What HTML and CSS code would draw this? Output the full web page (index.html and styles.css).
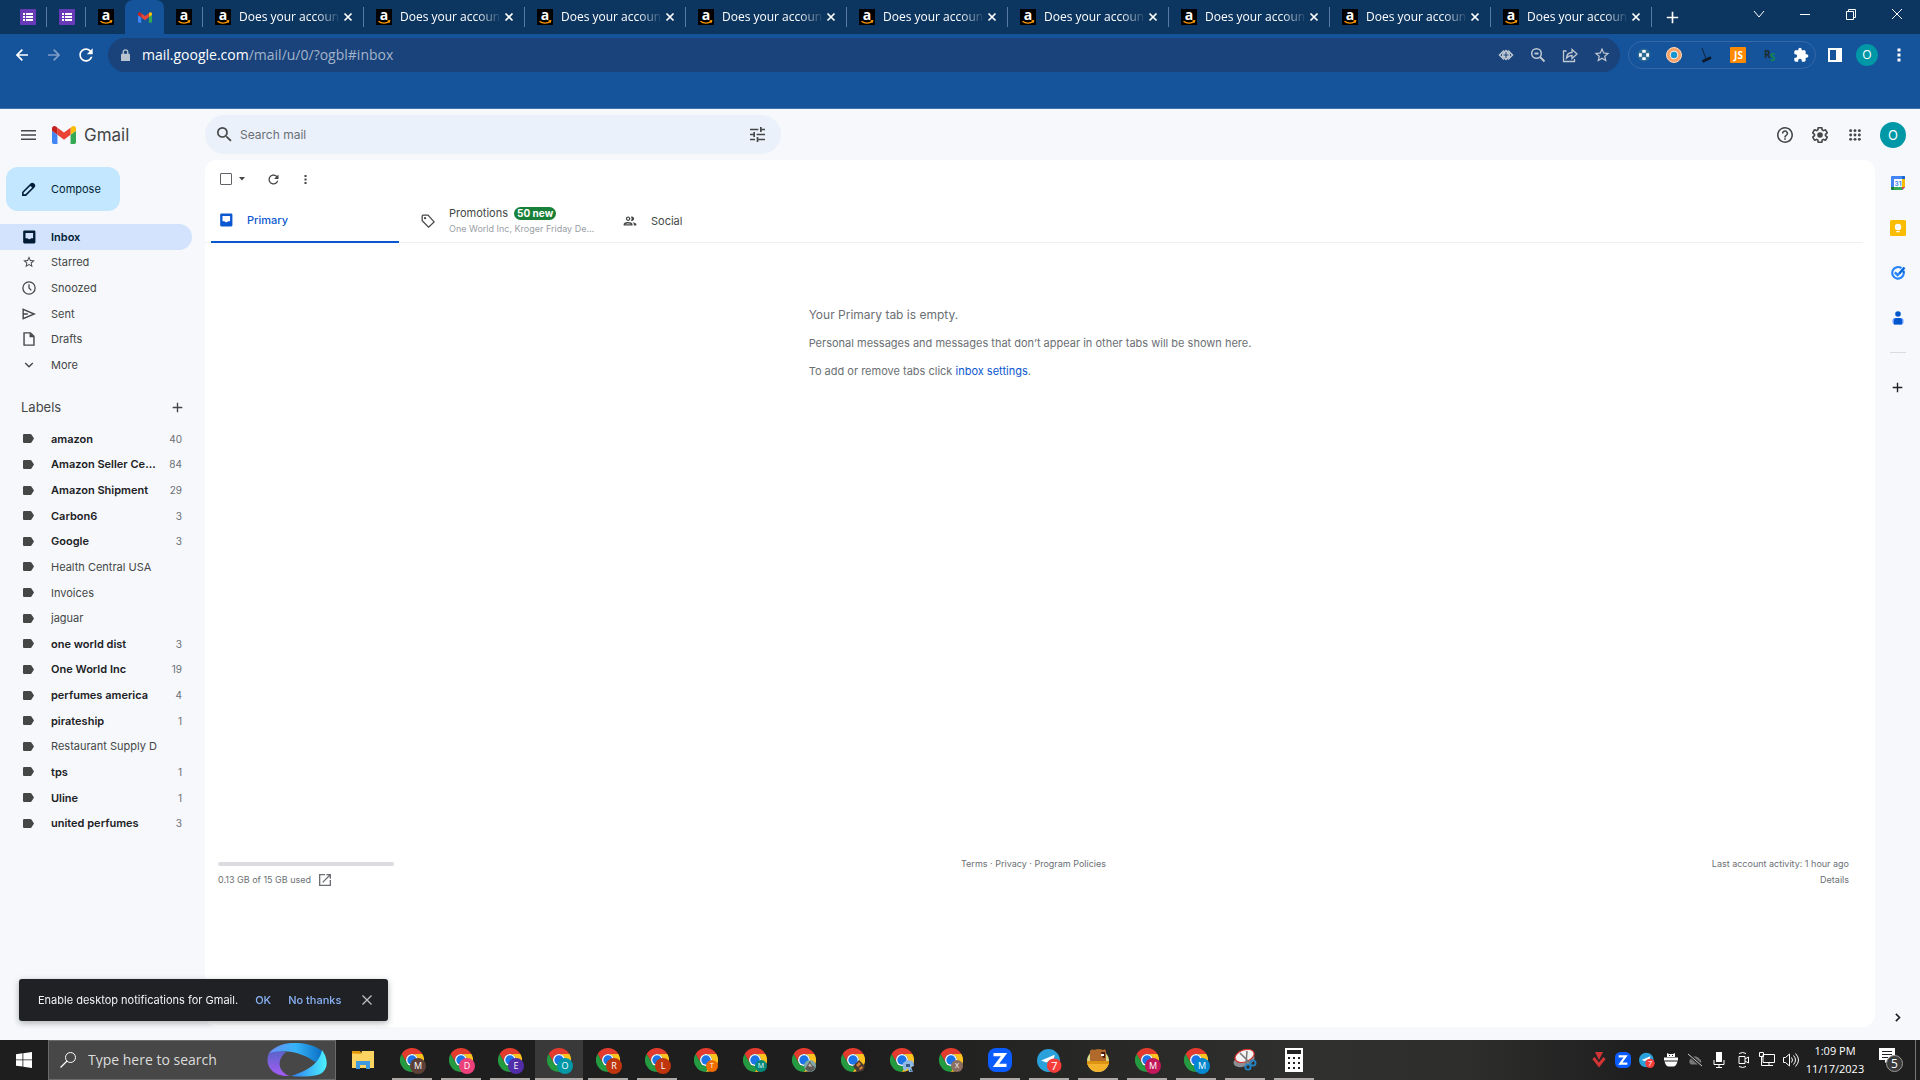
FILE: index.html
```html
<!DOCTYPE html>
<html lang="en">
  <head>
    <meta charset="utf-8" />
    <meta name="viewport" content="width=device-width,initial-scale=1.0" />
    <title>Inbox - Gmail</title>
    <link rel="stylesheet" href="styles.css">
  </head>

  <body>
    <!-- Shared icons -->
    <svg class="sprite" aria-hidden="true">
      <symbol id="i-forms" viewBox="0 0 16 16">
        <rect width="16" height="16" rx="1" fill="#673ab7" />
        <path fill="#fff" d="M3 4h2v2H3zm3 0h7v2H6zM3 7h2v2H3zm3 0h7v2H6zM3 10h2v2H3zm3 0h7v2H6z" />
      </symbol>
      <symbol id="i-amazon" viewBox="0 0 16 16">
        <rect width="16" height="16" fill="#000" />
        <text x="8" y="11" text-anchor="middle" font-size="14" font-weight="700" fill="#fff">a</text>
        <path fill="none" stroke="#f90" stroke-width="1.3" d="M2.5 12.2c3 2.6 8 2.6 10.6.4M11.6 12l2-.2-.4 1.8" />
      </symbol>
      <symbol id="i-gmail" viewBox="52 42 88 66">
        <path fill="#4285f4" d="M58 108h14V74L52 59v43c0 3.32 2.69 6 6 6" />
        <path fill="#34a853" d="M120 108h14c3.32 0 6-2.69 6-6V59l-20 15" />
        <path fill="#fbbc04" d="M120 48v26l20-15v-8c0-7.42-8.47-11.65-14.4-7.2" />
        <path fill="#ea4335" d="M72 74V48l24 18 24-18v26L96 92" />
        <path fill="#c5221f" d="M52 51v8l20 15V48l-5.6-4.2c-5.94-4.45-14.4-.22-14.4 7.2" />
      </symbol>
      <symbol id="i-x" viewBox="0 0 16 16">
        <path fill="none" stroke="currentColor" stroke-width="2" d="M4 4l8 8M12 4l-8 8" />
      </symbol>
      <symbol id="i-star" viewBox="0 0 24 24">
        <path fill="currentColor" d="M22 9.24l-7.19-.62L12 2 9.19 8.63 2 9.24l5.46 4.73L5.82 21 12 17.27 18.18 21l-1.63-7.03L22 9.24zM12 15.4l-3.76 2.27 1-4.28-3.32-2.88 4.38-.38L12 6.1l1.71 4.04 4.38.38-3.32 2.88 1 4.28L12 15.4z" />
      </symbol>
      <symbol id="i-refresh" viewBox="0 0 24 24">
        <path fill="currentColor" d="M17.65 6.35C16.2 4.9 14.21 4 12 4c-4.42 0-7.99 3.58-7.99 8s3.57 8 7.99 8c3.73 0 6.84-2.55 7.73-6h-2.08c-.82 2.33-3.04 4-5.65 4-3.31 0-6-2.69-6-6s2.69-6 6-6c1.66 0 3.14.69 4.22 1.78L13 11h7V4l-2.35 2.35z" />
      </symbol>
      <symbol id="i-arrow" viewBox="0 0 24 24">
        <path fill="none" stroke="currentColor" stroke-width="2.6" d="M21 12H5M12.5 4L4.500 12l8 8" />
      </symbol>
      <symbol id="i-dots" viewBox="0 0 16 16">
        <path fill="currentColor" d="M6.500 1.500h3v3h-3zM6.500 6.500h3v3h-3zM6.500 11.500h3v3h-3z" />
      </symbol>
      <symbol id="i-inbox" viewBox="0 0 24 24">
        <path fill="currentColor" d="M20 1H4a2 2 0 0 0-2 2v18a2 2 0 0 0 2 2h17a2 2 0 0 0 2-2V3a2 2 0 0 0-2-2zm-1 13h-3.500a3.300 3.300 0 0 1-6 0H6V5h13z" />
      </symbol>
      <symbol id="i-label" viewBox="0 0 24 24">
        <path fill="currentColor" d="M2.500 2H16c1 0 1.800.4 2.400 1.200L24 12l-5.600 8.800c-.6.8-1.400 1.200-2.400 1.200H2.500A2.500 2.500 0 0 1 0 19.500v-15A2.500 2.500 0 0 1 2.500 2z" />
      </symbol>
      <symbol id="i-plus" viewBox="0 0 16 16">
        <path fill="none" stroke="currentColor" stroke-width="2" d="M8 1v14M1 8h14" />
      </symbol>
      <symbol id="i-chrome" viewBox="0 0 48 48">
        <path fill="#e33b2e" d="M3.200 12A24 24 0 0 1 44.800 12H24A12 12 0 0 0 13.600 30Z" />
        <path fill="#249a41" d="M3.200 12L13.600 30A12 12 0 0 0 34.400 30L24 48A24 24 0 0 1 3.200 12" />
        <path fill="#fcc31f" d="M44.800 12H24A12 12 0 0 1 34.400 30L24 48A24 24 0 0 0 44.800 12Z" />
        <circle cx="24" cy="24" r="12" fill="#fff" />
        <circle cx="24" cy="24" r="9.400" fill="#1b74e8" />
      </symbol>
      <symbol id="i-zoom" viewBox="0 0 24 24">
        <rect width="24" height="24" rx="8" fill="#0b5cff" />
        <path fill="none" stroke="#fff" stroke-width="3.200" d="M5.500 6.600H16L8 17.400h10.500" />
      </symbol>
      <symbol id="i-telegram" viewBox="0 0 24 24">
        <circle cx="11" cy="12" r="11" fill="#2aa1da" />
        <path fill="#fff" d="M4 12l13-5.500-2.500 11-4-3 3.500-4-5 3.500z" />
        <circle cx="16.500" cy="17" r="7" fill="#f63d3a" />
        <text x="16.500" y="21" text-anchor="middle" font-size="11" fill="#fff">7</text>
      </symbol>
    </svg>

    <!-- Browser -->
    <div class="browser">
      <div class="tabs">
        <button class="pin" aria-label="Forms"><svg><use href="#i-forms" /></svg></button>
        <button class="pin" aria-label="Forms"><svg><use href="#i-forms" /></svg></button>
        <button class="pin plain" aria-label="Amazon"><svg><use href="#i-amazon" /></svg></button>
        <button class="pin plain active" aria-label="Gmail"><svg><use href="#i-gmail" /></svg></button>
        <button class="pin" aria-label="Amazon"><svg><use href="#i-amazon" /></svg></button>
        <div class="tab"><svg><use href="#i-amazon" /></svg><span>Does your accoun</span><button aria-label="Close tab"><svg><use href="#i-x" /></svg></button></div>
        <div class="tab"><svg><use href="#i-amazon" /></svg><span>Does your accoun</span><button aria-label="Close tab"><svg><use href="#i-x" /></svg></button></div>
        <div class="tab"><svg><use href="#i-amazon" /></svg><span>Does your accoun</span><button aria-label="Close tab"><svg><use href="#i-x" /></svg></button></div>
        <div class="tab"><svg><use href="#i-amazon" /></svg><span>Does your accoun</span><button aria-label="Close tab"><svg><use href="#i-x" /></svg></button></div>
        <div class="tab"><svg><use href="#i-amazon" /></svg><span>Does your accoun</span><button aria-label="Close tab"><svg><use href="#i-x" /></svg></button></div>
        <div class="tab"><svg><use href="#i-amazon" /></svg><span>Does your accoun</span><button aria-label="Close tab"><svg><use href="#i-x" /></svg></button></div>
        <div class="tab"><svg><use href="#i-amazon" /></svg><span>Does your accoun</span><button aria-label="Close tab"><svg><use href="#i-x" /></svg></button></div>
        <div class="tab"><svg><use href="#i-amazon" /></svg><span>Does your accoun</span><button aria-label="Close tab"><svg><use href="#i-x" /></svg></button></div>
        <div class="tab"><svg><use href="#i-amazon" /></svg><span>Does your accoun</span><button aria-label="Close tab"><svg><use href="#i-x" /></svg></button></div>
        <button class="new-tab" aria-label="New tab"><svg><use href="#i-plus" /></svg></button>
        <div class="window-buttons">
          <button aria-label="Search tabs"><svg viewBox="0 0 12 12"><path d="M1 3l5 6 5-6" /></svg></button>
          <button aria-label="Minimize"><svg viewBox="0 0 12 12"><path d="M1 6.500h10" /></svg></button>
          <button aria-label="Restore"><svg viewBox="0 0 12 12"><path d="M1.500 3.500h7v8h-7zM3.500 3.500v-2h7v8h-2" /></svg></button>
          <button aria-label="Close"><svg viewBox="0 0 12 12"><path d="M1 1l10 10M11 1L1 11" /></svg></button>
        </div>
      </div>

      <div class="toolbar">
        <button class="tool" aria-label="Back"><svg><use href="#i-arrow" /></svg></button>
        <button class="tool forward" aria-label="Forward"><svg><use href="#i-arrow" /></svg></button>
        <button class="tool reload" aria-label="Reload"><svg><use href="#i-refresh" /></svg></button>
        <div class="omnibox">
          <svg class="lock" viewBox="0 0 10 14"><path fill="#b9c3d0" d="M1 5h8a1 1 0 0 1 1 1v7H0V6a1 1 0 0 1 1-1z" /><path fill="none" stroke="#b9c3d0" stroke-width="1.500" d="M2.500 6V3.200a2.500 2.500 0 0 1 5 0V6" /></svg>
          <span class="url">mail.google.com<span>/mail/u/0/?ogbl#inbox</span></span>
          <button class="tool" aria-label="Site preview"><svg viewBox="0 0 16 16"><path fill="none" stroke="currentColor" stroke-width="1.500" d="M6 3.500L1.500 8 6 12.500M10 3.500L14.500 8 10 12.500" /><path fill="currentColor" d="M8 2.500l4 4v3l-4 4-4-4v-3z" /><path stroke="#18427a" d="M8 5v6M5.500 8h5" /></svg></button>
          <button class="tool" aria-label="Zoom"><svg viewBox="0 0 16 16"><circle cx="6.500" cy="6.500" r="4.800" fill="none" stroke="currentColor" stroke-width="1.500" /><path fill="none" stroke="currentColor" stroke-width="1.800" d="M10 10l4.500 4.500M4.500 6.500h4" /></svg></button>
          <button class="tool" aria-label="Share"><svg viewBox="0 0 16 16"><path fill="none" stroke="currentColor" stroke-width="1.300" d="M4.500 4H1.500v10.500h11V12M4.500 11c.3-3.600 2.300-5.400 5.500-5.500V2.500l5 4.500-5 4.500v-3C7.500 8.500 6 9.300 4.500 11z" /></svg></button>
          <button class="tool star" aria-label="Bookmark"><svg><use href="#i-star" /></svg></button>
        </div>
        <div class="extensions">
          <button class="tool" aria-label="Grid extension"><svg viewBox="0 0 16 16"><circle cx="8" cy="8" r="6.500" fill="#2d6c94" /><path fill="#fff" d="M6.300 3h3.400v2.800H6.300zM6.300 10.200h3.400V13H6.300zM3 6.300h2.800v3.400H3zM10.200 6.300H13v3.400h-2.800z" /></svg></button>
          <button class="tool" aria-label="Donut extension"><svg viewBox="0 0 16 16"><circle cx="8" cy="8" r="7.500" fill="#f8a26a" stroke="#fbd9b9" /><circle cx="8" cy="8" r="4.200" fill="#f2eee6" /><circle cx="8" cy="8" r="3.200" fill="#1694cf" /></svg></button>
          <button class="tool" aria-label="Broom extension"><svg viewBox="0 0 16 16"><path fill="none" stroke="#12233d" stroke-width="1" d="M4 1l4 11" /><path stroke="#0d1828" stroke-width="2.500" d="M4.500 14.500l8.500-4" /></svg></button>
          <button class="tool" aria-label="JavaScript"><svg viewBox="0 0 16 16"><rect width="16" height="16" rx="1" fill="#ff8a00" /><text x="8.500" y="12" text-anchor="middle" font-size="10" font-weight="700" fill="#fff">JS</text></svg></button>
          <button class="tool" aria-label="RS"><svg viewBox="0 0 16 16"><text x="2" y="11" font-size="10" font-weight="700" fill="#1d2b2f">R</text><text x="8" y="14" font-size="10" font-weight="700" fill="#128a48">S</text></svg></button>
          <button class="tool" aria-label="Extensions"><svg viewBox="0 0 24 24"><path fill="#fff" d="M20.500 11H19V7c0-1.100-.9-2-2-2h-4V3.500C13 2.120 11.880 1 10.500 1S8 2.120 8 3.500V5H4c-1.100 0-1.990.9-1.990 2v3.800H3.500c1.490 0 2.700 1.210 2.700 2.700s-1.210 2.700-2.700 2.700H2V20c0 1.100.9 2 2 2h3.800v-1.500c0-1.490 1.210-2.700 2.700-2.700s2.700 1.210 2.700 2.700V22H17c1.100 0 2-.9 2-2v-4h1.500c1.380 0 2.500-1.120 2.500-2.500S21.880 11 20.500 11z" /></svg></button>
        </div>
        <button class="tool" aria-label="Side panel"><svg viewBox="0 0 16 16"><path fill="#fff" fill-rule="evenodd" d="M1 1h14v14H1zm2 2v10h6V3z" /></svg></button>
        <button class="tool" aria-label="Profile"><span class="profile">O</span></button>
        <button class="tool" aria-label="Menu"><svg><use href="#i-dots" /></svg></button>
      </div>
    </div>

    <!-- Gmail -->
    <div class="gmail">
      <div class="brand">
        <button class="icon" aria-label="Main menu"><svg viewBox="0 0 16 12"><path stroke="currentColor" stroke-width="1.500" d="M0 1.500h16M0 6h16M0 10.500h16" /></svg></button>
        <svg class="logo"><use href="#i-gmail" /></svg>
        <span>Gmail</span>
      </div>

      <header>
        <form class="search">
          <svg viewBox="3 3 18 18"><path fill="currentColor" d="M15.500 14h-.79l-.28-.27A6.471 6.471 0 0 0 16 9.500 6.500 6.500 0 1 0 9.500 16c1.610 0 3.090-.59 4.230-1.570l.27.28v.79l5 4.990L20.490 19l-4.990-5zm-6 0C7.010 14 5 11.990 5 9.500S7.010 5 9.500 5 14 7.010 14 9.500 11.990 14 9.500 14z" /></svg>
          <input type="text" placeholder="Search mail" aria-label="Search mail" />
          <button type="button" aria-label="Search options"><svg viewBox="3 3 18 18"><path fill="currentColor" d="M3 17v2h6v-2H3zM3 5v2h10V5H3zm10 16v-2h8v-2h-8v-2h-2v6h2zM7 9v2H3v2h4v2h2V9H7zm14 4v-2H11v2h10zm-6-4h2V7h4V5h-4V3h-2v6z" /></svg></button>
        </form>
        <button class="icon" aria-label="Support"><svg viewBox="2 2 20 20"><path fill="currentColor" d="M11 18h2v-2h-2v2zm1-16C6.480 2 2 6.480 2 12s4.480 10 10 10 10-4.480 10-10S17.520 2 12 2zm0 18c-4.410 0-8-3.590-8-8s3.590-8 8-8 8 3.590 8 8-3.590 8-8 8zm0-14c-2.210 0-4 1.790-4 4h2c0-1.100.9-2 2-2s2 .9 2 2c0 2-3 1.750-3 5h2c0-2.250 3-2.500 3-5 0-2.210-1.790-4-4-4z" /></svg></button>
        <button class="icon" aria-label="Settings"><svg viewBox="2 2 20 20"><path fill="currentColor" d="M13.850 22.250h-3.700c-.74 0-1.360-.54-1.450-1.270l-.27-1.890c-.27-.14-.53-.29-.79-.46l-1.800.72c-.7.26-1.470-.03-1.810-.65L2.200 15.530c-.35-.66-.2-1.440.36-1.880l1.530-1.190c-.01-.15-.02-.3-.02-.46 0-.15.01-.31.02-.46l-1.520-1.190c-.59-.45-.74-1.260-.37-1.880l1.850-3.190c.34-.62 1.110-.9 1.790-.63l1.810.73c.26-.17.52-.32.78-.46l.27-1.910c.09-.7.71-1.250 1.440-1.250h3.700c.74 0 1.360.54 1.450 1.270l.27 1.890c.27.14.53.29.79.46l1.800-.72c.71-.26 1.480.03 1.820.65l1.840 3.180c.36.66.2 1.440-.36 1.880l-1.520 1.190c.01.15.02.3.02.46s-.01.31-.02.46l1.520 1.190c.56.45.72 1.230.37 1.860l-1.860 3.220c-.34.62-1.110.9-1.800.63l-1.800-.72c-.26.17-.52.32-.78.46l-.27 1.910c-.1.68-.72 1.220-1.460 1.220zm-3.230-2h2.760l.37-2.550.53-.22c.44-.18.88-.44 1.340-.78l.45-.34 2.380.96 1.380-2.400-2.030-1.580.07-.56c.03-.26.06-.51.06-.78s-.03-.53-.06-.78l-.07-.56 2.030-1.580-1.390-2.400-2.390.96-.45-.35c-.42-.32-.87-.58-1.330-.77l-.52-.22-.37-2.550h-2.760l-.37 2.550-.53.21c-.44.19-.88.44-1.340.79l-.45.33-2.380-.95-1.390 2.390 2.030 1.580-.07.56a7 7 0 0 0-.06.79c0 .26.02.53.06.78l.07.56-2.030 1.580 1.380 2.400 2.390-.96.45.35c.43.33.86.58 1.330.77l.53.22.38 2.550z" /><circle cx="12" cy="12" r="3.500" fill="currentColor" /></svg></button>
        <button class="icon" aria-label="Google apps"><svg viewBox="1 1 22 22"><g fill="currentColor"><circle cx="6" cy="6" r="2" /><circle cx="12" cy="6" r="2" /><circle cx="18" cy="6" r="2" /><circle cx="6" cy="12" r="2" /><circle cx="12" cy="12" r="2" /><circle cx="18" cy="12" r="2" /><circle cx="6" cy="18" r="2" /><circle cx="12" cy="18" r="2" /><circle cx="18" cy="18" r="2" /></g></svg></button>
        <button class="avatar" aria-label="Google Account">O</button>
      </header>

      <nav>
        <button class="compose"><svg viewBox="0 0 24 24"><path fill="none" stroke="currentColor" stroke-width="2.500" d="M3 21v-4.500L16.500 3l4.500 4.500L7.500 21z" /><path fill="currentColor" d="M14 5l3.500-3.500Q19 .5 20.500 2L22 3.500Q23.500 5 22.500 6.500L19 10z" /></svg>Compose</button>
        <ul class="folders">
          <li><a href="#" class="current"><svg><use href="#i-inbox" /></svg>Inbox</a></li>
          <li><a href="#"><svg><use href="#i-star" /></svg>Starred</a></li>
          <li><a href="#"><svg viewBox="0 0 24 24"><circle cx="12" cy="12" r="10.500" fill="none" stroke="currentColor" stroke-width="2.200" /><path fill="none" stroke="currentColor" stroke-width="2.200" d="M12 5.500V12l4 4" /></svg>Snoozed</a></li>
          <li><a href="#"><svg viewBox="0 0 24 24"><path fill="none" stroke="currentColor" stroke-width="2.400" d="M2 4v16l19-8zM2 12h8" /></svg>Sent</a></li>
          <li><a href="#"><svg viewBox="0 0 24 24"><path fill="none" stroke="currentColor" stroke-width="2.400" d="M3.500 1.500h11l6 6v15h-17z" /><path fill="currentColor" d="M13 1v8h8z" /></svg>Drafts</a></li>
          <li><a href="#"><svg viewBox="0 0 24 24"><path fill="none" stroke="currentColor" stroke-width="2.400" d="M5.500 8.500l6.500 6.500 6.500-6.500" /></svg>More</a></li>
        </ul>
        <div class="labels-head"><h2>Labels</h2><button aria-label="Create new label"><svg><use href="#i-plus" /></svg></button></div>
        <ul class="labels">
          <li><a href="#" class="unread"><svg><use href="#i-label" /></svg><span>amazon</span><i>40</i></a></li>
          <li><a href="#" class="unread"><svg><use href="#i-label" /></svg><span>Amazon Seller Central</span><i>84</i></a></li>
          <li><a href="#" class="unread"><svg><use href="#i-label" /></svg><span>Amazon Shipment</span><i>29</i></a></li>
          <li><a href="#" class="unread"><svg><use href="#i-label" /></svg><span>Carbon6</span><i>3</i></a></li>
          <li><a href="#" class="unread"><svg><use href="#i-label" /></svg><span>Google</span><i>3</i></a></li>
          <li><a href="#"><svg><use href="#i-label" /></svg><span>Health Central USA</span></a></li>
          <li><a href="#"><svg><use href="#i-label" /></svg><span>Invoices</span></a></li>
          <li><a href="#"><svg><use href="#i-label" /></svg><span>jaguar</span></a></li>
          <li><a href="#" class="unread"><svg><use href="#i-label" /></svg><span>one world dist</span><i>3</i></a></li>
          <li><a href="#" class="unread"><svg><use href="#i-label" /></svg><span>One World Inc</span><i>19</i></a></li>
          <li><a href="#" class="unread"><svg><use href="#i-label" /></svg><span>perfumes america</span><i>4</i></a></li>
          <li><a href="#" class="unread"><svg><use href="#i-label" /></svg><span>pirateship</span><i>1</i></a></li>
          <li><a href="#"><svg><use href="#i-label" /></svg><span>Restaurant Supply D</span></a></li>
          <li><a href="#" class="unread"><svg><use href="#i-label" /></svg><span>tps</span><i>1</i></a></li>
          <li><a href="#" class="unread"><svg><use href="#i-label" /></svg><span>Uline</span><i>1</i></a></li>
          <li><a href="#" class="unread"><svg><use href="#i-label" /></svg><span>united perfumes</span><i>3</i></a></li>
        </ul>
      </nav>

      <main>
        <div class="actions">
          <input type="checkbox" aria-label="Select" />
          <button class="caret" aria-label="Select options"><svg viewBox="0 0 6 4"><path fill="currentColor" d="M0 0h6L3 3.500z" /></svg></button>
          <button aria-label="Refresh"><svg><use href="#i-refresh" /></svg></button>
          <button class="more" aria-label="More"><svg><use href="#i-dots" /></svg></button>
        </div>

        <div class="categories">
          <button class="selected"><svg><use href="#i-inbox" /></svg><span>Primary</span></button>
          <button>
            <svg viewBox="0 0 24 24"><path fill="none" stroke="currentColor" stroke-width="2.200" d="M2 3.500v8L13 22.500l9.500-9L12 2H3.500z" /><circle cx="7" cy="7" r="2" fill="currentColor" /></svg>
            <span>Promotions <b>50 new</b><small>One World Inc, Kroger Friday Deals</small></span>
          </button>
          <button><svg viewBox="1 1 22 22"><path fill="currentColor" d="M9 13.750c-2.340 0-7 1.170-7 3.500V19h14v-1.750c0-2.330-4.660-3.500-7-3.500zM4.340 17c.84-.58 2.870-1.250 4.660-1.250s3.820.67 4.660 1.250H4.340zM9 12c1.930 0 3.500-1.570 3.500-3.500S10.930 5 9 5 5.500 6.570 5.500 8.500 7.070 12 9 12zm0-5c.83 0 1.500.67 1.500 1.500S9.830 10 9 10s-1.500-.67-1.500-1.500S8.170 7 9 7zm7.040 6.810c1.160.84 1.960 1.960 1.960 3.440V19h4v-1.750c0-2.020-3.500-3.170-5.960-3.440zM15 12c1.930 0 3.500-1.570 3.500-3.500S16.930 5 15 5c-.54 0-1.040.13-1.500.35.63.89 1 1.980 1 3.150s-.37 2.260-1 3.150c.46.22.96.35 1.500.35z" /></svg><span>Social</span></button>
        </div>

        <div class="empty">
          <div>
            <h1>Your Primary tab is empty.</h1>
            <p>Personal messages and messages that don’t appear in other tabs will be shown here.</p>
            <p>To add or remove tabs click <a href="#">inbox settings</a>.</p>
          </div>
        </div>

        <footer>
          <div class="storage">
            <div class="meter"></div>
            <a href="#">0.13 GB of 15 GB used <svg viewBox="3 3 18 18"><path fill="currentColor" d="M19 19H5V5h7V3H3v18h18v-9h-2v7zM14 3v2h3.590l-9.830 9.830 1.410 1.410L19 6.410V10h2V3h-7z" /></svg></a>
          </div>
          <div class="terms"><a href="#">Terms</a> · <a href="#">Privacy</a> · <a href="#">Program Policies</a></div>
          <div class="activity">Last account activity: 1 hour ago<br /><a href="#">Details</a></div>
        </footer>
      </main>

      <aside>
        <button aria-label="Calendar"><svg viewBox="0 0 16 16"><rect x="1" y="1" width="14" height="14" rx="1" fill="#4285f4" /><path fill="#1967d2" d="M12 1h2a1 1 0 0 1 1 1v2h-3z" /><path fill="#fbbc04" d="M12 4h3v8h-3z" /><path fill="#34a853" d="M4 12h8v3H4z" /><path fill="#188038" d="M1 12h3v3H2a1 1 0 0 1-1-1z" /><path fill="#ea4335" d="M12 12h3l-3 3z" /><path fill="#f6f8fc" d="M15 12.500V15h-2.500z" /><path fill="#fff" d="M4 4h8v8H4z" /><text x="8" y="10.500" text-anchor="middle" font-size="6.500" font-weight="700" fill="#4285f4">31</text></svg></button>
        <button aria-label="Keep"><svg viewBox="0 0 16 16"><rect width="16" height="16" rx="1.500" fill="#fbbc04" /><circle cx="8" cy="7" r="3.200" fill="#fff" /><path fill="#fff" d="M6.300 8h3.400v2H6.300zM6.300 11h3.400v1.300H6.300z" /></svg></button>
        <button aria-label="Tasks"><svg viewBox="0 0 16 16"><path fill="none" stroke="#2684fc" stroke-width="2.200" d="M11.500 3.200A5.800 5.800 0 1 0 13.800 8" /><path fill="none" stroke="#0066da" stroke-width="2.200" d="M13.800 8a6 6 0 0 0-.5-2.300" /><path fill="none" stroke="#2684fc" stroke-width="2.400" d="M4.800 7.300L7.700 10l2.500-2.500" /><path stroke="#0066da" stroke-width="2.400" d="M9.500 8.200l5-5.700" /></svg></button>
        <button aria-label="Contacts"><svg viewBox="0 0 16 16"><circle cx="8" cy="4" r="2.800" fill="#0057cc" /><rect x="2.500" y="8" width="11" height="6.500" rx="2.500" fill="#6b9cff" /><path fill="#0057cc" d="M6.500 8h3a2.500 2.500 0 0 1 2.500 2.500v4H4v-4A2.500 2.500 0 0 1 6.500 8z" /></svg></button>
        <hr />
        <button class="addons" aria-label="Get add-ons"><svg><use href="#i-plus" /></svg></button>
        <button class="hide-panel" aria-label="Hide side panel"><svg viewBox="0 0 16 16"><path fill="none" stroke="currentColor" stroke-width="2" d="M6 3.500L10.500 8 6 12.500" /></svg></button>
      </aside>
    </div>

    <div class="toast" role="alert">
      <span>Enable desktop notifications for Gmail.</span>
      <button>OK</button>
      <button>No thanks</button>
      <button class="dismiss" aria-label="Close"><svg viewBox="0 0 10 10"><path stroke="currentColor" stroke-width="1.300" d="M.5.5l9 9M9.500.5l-9 9" /></svg></button>
    </div>

    <!-- Windows taskbar -->
    <div class="taskbar">
      <button class="start" aria-label="Start"><svg viewBox="0 0 16 16"><path fill="#fff" d="M0 2.200L6.500 1.300v6.200H0zM7.300 1.200L16 0v7.500H7.300zM0 8.300h6.500v6.300L0 13.700zM7.300 8.300H16V16l-8.700-1.200z" /></svg></button>
      <div class="task-search">
        <svg class="glass" viewBox="0 0 16 16"><circle cx="10.500" cy="5.500" r="5" fill="none" stroke="#fff" /><path stroke="#fff" stroke-width="1.200" d="M7 9L.5 15.500" /></svg>
        <input type="text" placeholder="Type here to search" aria-label="Type here to search" />
        <svg class="swirl" viewBox="0 0 60 34">
          <defs>
            <linearGradient id="g1" x1="0" x2="1"><stop offset="0" stop-color="#6d8df5" /><stop offset=".5" stop-color="#35b4f8" /><stop offset="1" stop-color="#0b6fc4" /></linearGradient>
            <linearGradient id="g2" x1="0" x2="1"><stop offset="0" stop-color="#2f7bf0" /><stop offset="1" stop-color="#4cf0fd" /></linearGradient>
            <linearGradient id="g3" x1="0" y1="0" x2="0" y2="1"><stop offset="0" stop-color="#5a63c8" /><stop offset="1" stop-color="#a55cf5" /></linearGradient>
          </defs>
          <path fill="url(#g3)" d="M2 10C-3 21 4 34 23 33 11 29 9 17 19 9 12 7 6 8 2 10z" />
          <path fill="url(#g1)" d="M2 10C9 2 20-1 32 0c12 1 20 5 23 8 0 5-3 9-7 11C38 11 20 5 2 10z" />
          <path fill="url(#g2)" d="M55 7c5 7 7 16 1 22-5 5-20 5-32 4C36 29 52 23 55 7z" />
        </svg>
      </div>
      <div class="apps">
        <button aria-label="File Explorer"><svg viewBox="-16 -16 32 32"><path fill="#e09a0a" d="M-11-9h8l2 3h-10z" /><path fill="#fdd462" d="M-11-6.500h1L-2-6l1-3h12V8h-22z" /><path fill="#3f9ae0" d="M-7 9V1h14v8H3V5h-6v4z" /></svg></button>
        <button class="open" aria-label="Chrome M"><svg viewBox="-16 -16 32 32"><use href="#i-chrome" x="-12" y="-12" width="24" height="24" /><circle cx="6" cy="6" r="8" fill="#5d4037" /><text x="6" y="9">M</text></svg></button>
        <button class="open" aria-label="Chrome D"><svg viewBox="-16 -16 32 32"><use href="#i-chrome" x="-12" y="-12" width="24" height="24" /><circle cx="6" cy="6" r="8" fill="#ec407a" /><text x="6" y="9">D</text></svg></button>
        <button class="open" aria-label="Chrome E"><svg viewBox="-16 -16 32 32"><use href="#i-chrome" x="-12" y="-12" width="24" height="24" /><circle cx="6" cy="6" r="8" fill="#512da8" /><text x="6" y="9">E</text></svg></button>
        <button class="open focused" aria-label="Chrome O"><svg viewBox="-16 -16 32 32"><use href="#i-chrome" x="-12" y="-12" width="24" height="24" /><circle cx="6" cy="6" r="8" fill="#0097a7" /><text x="6" y="9">O</text></svg></button>
        <button class="open" aria-label="Chrome R"><svg viewBox="-16 -16 32 32"><use href="#i-chrome" x="-12" y="-12" width="24" height="24" /><circle cx="6" cy="6" r="8" fill="#bf360c" /><text x="6" y="9">R</text></svg></button>
        <button class="open" aria-label="Chrome L"><svg viewBox="-16 -16 32 32"><use href="#i-chrome" x="-12" y="-12" width="24" height="24" /><circle cx="6" cy="6" r="8" fill="#bf360c" /><text x="6" y="9">L</text></svg></button>
        <button aria-label="Chrome T"><svg class="small" viewBox="-16 -16 32 32"><use href="#i-chrome" x="-12" y="-12" width="24" height="24" /><circle cx="6" cy="6" r="6" fill="#ef6c00" /><text x="6" y="8">T</text></svg></button>
        <button aria-label="Chrome M"><svg class="small" viewBox="-16 -16 32 32"><use href="#i-chrome" x="-12" y="-12" width="24" height="24" /><circle cx="6" cy="6" r="6" fill="#00897b" /><text x="6" y="8">M</text></svg></button>
        <button aria-label="Chrome profile"><svg viewBox="-16 -16 32 32"><use href="#i-chrome" x="-12" y="-12" width="24" height="24" /><circle cx="6" cy="6" r="6" fill="#7fa9ab" /><path fill="#5d5a58" d="M1 9l3-5 2-3 2 4 3 2-1 3-4 2z" /><path fill="#c9b7a9" d="M4 6l2-3 2 4z" /></svg></button>
        <button aria-label="Chrome profile"><svg viewBox="-16 -16 32 32"><use href="#i-chrome" x="-12" y="-12" width="24" height="24" /><path fill="#4b3a32" d="M0 6l6-6 6 6-2 5-6 1z" /><path fill="#d98032" d="M3 5l3-3 2 2-3 3zM6 8l3-2 1 2-3 2z" /></svg></button>
        <button aria-label="Chrome profile"><svg viewBox="-16 -16 32 32"><use href="#i-chrome" x="-12" y="-12" width="24" height="24" /><path fill="#8eb8e6" d="M1 3l4-3 6 1 1 5-3 1 2 5H7L6 8 3 11 1 9z" /><path fill="#375c87" d="M4 4h4v3H4zM8 9l3 3-3-1z" /></svg></button>
        <button aria-label="Chrome X"><svg class="small" viewBox="-16 -16 32 32"><use href="#i-chrome" x="-12" y="-12" width="24" height="24" /><circle cx="6" cy="6" r="6" fill="#8d6e63" /><text x="6" y="8">X</text></svg></button>
        <button class="open" aria-label="Zoom"><svg viewBox="-4 -4 32 32"><use href="#i-zoom" width="24" height="24" /></svg></button>
        <button class="open" aria-label="Telegram"><svg viewBox="-4 -4 32 32"><use href="#i-telegram" width="25" height="25" /></svg></button>
        <button class="open" aria-label="Bear"><svg viewBox="-16 -16 32 32"><circle cx="0" cy="1" r="11" fill="#d9d98a" /><path fill="#b06a2c" d="M-8-9q2-3 4-1 5-2 9 0 3-2 3 2v10H-8z" /><path fill="#4a1c12" d="M3-8h4v6H5z" /><path fill="#fff" d="M3-6h3v2H3z" /><path fill="#f4b22c" d="M-11 1h22a11 11 0 0 1-22 0z" /><path fill="#dc9412" d="M-11 1h22v3h-22z" /></svg></button>
        <button class="open" aria-label="Chrome M"><svg viewBox="-16 -16 32 32"><use href="#i-chrome" x="-12" y="-12" width="24" height="24" /><circle cx="6" cy="6" r="8" fill="#c2185b" /><text x="6" y="9">M</text></svg></button>
        <button class="open" aria-label="Chrome M"><svg viewBox="-16 -16 32 32"><use href="#i-chrome" x="-12" y="-12" width="24" height="24" /><circle cx="6" cy="6" r="8" fill="#0288d1" /><text x="6" y="9">M</text></svg></button>
        <button class="open" aria-label="Snipping Tool"><svg viewBox="-16 -16 32 32"><ellipse cx="-1" cy="0" rx="11" ry="6" fill="#8b8f94" transform="rotate(-20)" /><ellipse cx="1" cy="-4" rx="10" ry="6" fill="#f4f4f4" stroke="#d4322c" stroke-width="1.200" transform="rotate(-20)" /><path stroke="#777" stroke-width="1.500" d="M-5-7L5 3M2-9L1 4" /><g fill="none" stroke="#2383c4" stroke-width="1.800"><circle cx="3" cy="7" r="2.600" /><circle cx="8" cy="3" r="2.600" /></g></svg></button>
        <button class="open" aria-label="Calculator"><svg viewBox="-16 -16 32 32"><path fill="#fff" d="M-9-12H9v24H-9z" /><path fill="#222" d="M-7-10H7v4H-7zM-6-3h2v2h-2zM-1-3h2v2h-2zM4-3h2v2H4zM-6 2h2v2h-2zM-1 2h2v2h-2zM4 2h2v2H4zM-6 7h2v2h-2zM-1 7h2v2h-2zM4 7h2v2H4z" /></svg></button>
      </div>
      <div class="tray">
        <svg viewBox="0 0 16 16"><path fill="#d13434" d="M4 0h8l-4 8z" /><path fill="none" stroke="#d13434" stroke-width="3" d="M2.500 6L8 13l5.500-7" /></svg>
        <svg><use href="#i-zoom" /></svg>
        <svg><use href="#i-telegram" /></svg>
        <svg viewBox="0 0 16 16"><path fill="#fff" d="M4 1l2 1h4l2-1v4H4z" /><path fill="#fff" d="M1 5.500h14v3H1zM1.500 9.500h13q-1.500 5-4 5h-5q-2.500 0-4-5z" /><path fill="#222" d="M6 3h1v1H6zM9 3h1v1H9z" /></svg>
        <svg viewBox="0 0 16 16"><path fill="#777" d="M4 12.500a3.500 3.500 0 0 1 0-6A5 5 0 0 1 12.500 7a3 3 0 0 1 0 5.500z" /><path stroke="#222" stroke-width="3" d="M1 2l14 12" /><path stroke="#ccc" d="M1 2l14 12" /></svg>
        <svg viewBox="0 0 16 16"><path fill="#fff" d="M5 0h6v10H5z" /><path fill="none" stroke="#fff" d="M3 8v4.500h10V8M8 12v3M5 15.500h6" /></svg>
        <svg viewBox="0 0 16 16"><path fill="none" stroke="#fff" d="M4 4.500h6v7H4zM10 7l3.500-2v6L10 9M4 1.500q4-2 7 0M4 14.500q4 2 7 0" /></svg>
        <svg viewBox="0 0 16 16"><path fill="none" stroke="#fff" d="M4 2.500h11.500v8H4zM10 10.500v3M6 13.500h8M.5.500h4v4h-4zM2.500 4.500v9h4" /></svg>
        <svg viewBox="0 0 16 16"><path fill="none" stroke="#fff" d="M.5 5.500h2L6.500 2v12L2.500 10.500h-2zM8.500 5.500q2 2.500 0 5M10.500 3.500q4 4.500 0 9M12.500 1.500q6 6.500 0 13" /></svg>
      </div>
      <div class="clock">1:09 PM<br />11/17/2023</div>
      <button class="notifications" aria-label="Notifications">
        <svg viewBox="0 0 24 24"><path fill="#fff" d="M0 0h16v12h-6l-4 3v-3H0z" /><path stroke="#222" d="M3 3.500h10M3 6.500h10M3 9.500h6" /><circle cx="15.500" cy="15.500" r="8" fill="#3a3a3a" stroke="#9a9a9a" /><text x="15.500" y="20" text-anchor="middle" font-size="12" fill="#fff">5</text></svg>
      </button>
    </div>
  </body>
</html>
```

FILE: styles.css
```css
* {
  box-sizing: border-box;
}
body {
  margin: 0;
  min-height: 100vh;
  display: flex;
  flex-direction: column;
  background: #f6f8fc;
  color: #444746;
  font-family: Inter, Roboto, sans-serif;
  font-size: 11px;
  line-height: 16px;
}

/* resets */
button {
  border: none;
  margin: 0;
  padding: 0;
  background: transparent;
  color: inherit;
  font: inherit;
  display: flex;
  align-items: center;
  justify-content: center;
}
input {
  border: none;
  padding: 0;
  background: transparent;
  font: inherit;
  min-width: 0;
  outline: none;
}
ul {
  list-style: none;
  margin: 0;
  padding: 0;
}
a {
  color: inherit;
  text-decoration: none;
}
svg {
  display: block;
  flex: none;
}
.sprite {
  display: none;
}

/* browser */
.browser {
  background: #15539a;
  color: #fff;
  border-bottom: 1px solid #3f74ae;
  height: 109px;
  font-family: "Open Sans", "Noto Sans", sans-serif;
  font-size: 12px;
}
.tabs {
  display: flex;
  height: 34px;
  padding-left: 8px;
  background: #0c355f;
}
.pin,
.tab {
  position: relative;
  display: flex;
  align-items: center;
}
.pin {
  width: 39px;
}
.pin::after,
.tab::after {
  content: "";
  position: absolute;
  right: 0;
  top: 7px;
  height: 20px;
  width: 1px;
  background: #587ba3;
}
.pin.plain::after {
  display: none;
}
.pin svg,
.tab > svg {
  width: 16px;
  height: 16px;
}
.pin.active {
  background: #15539a;
  border-radius: 8px 8px 0 0;
}
.pin.active svg {
  width: 14px;
  height: 11px;
}
.tab {
  flex: 0 1 161px;
  min-width: 0;
  padding: 0 9px 0 12px;
}
.tab span {
  flex: 1;
  margin-left: 8px;
  overflow: hidden;
  white-space: nowrap;
  -webkit-mask-image: linear-gradient(to right, #000 75%, transparent);
  mask-image: linear-gradient(to right, #000 75%, transparent);
}
.tab button svg {
  width: 14px;
  height: 14px;
}
.new-tab {
  width: 40px;
}
.new-tab svg {
  width: 13px;
  height: 13px;
}
.window-buttons {
  display: flex;
  margin-left: auto;
}
.window-buttons button {
  width: 46px;
  height: 28px;
}
.window-buttons svg {
  width: 12px;
  height: 12px;
  fill: none;
  stroke: #fff;
}

.toolbar {
  display: flex;
  align-items: center;
  height: 42px;
  padding: 0 5px 0 6px;
}
.tool {
  width: 32px;
  height: 32px;
}
.tool svg {
  width: 16px;
  height: 16px;
}
.forward {
  color: #7f9fc6;
}
.forward svg {
  transform: scaleX(-1);
}
.reload svg {
  width: 20px;
  height: 20px;
}
.star svg {
  width: 18px;
  height: 18px;
}
.omnibox {
  flex: 1;
  height: 34px;
  margin: 0 8px 0 6px;
  padding: 0 2px 0 13px;
  display: flex;
  align-items: center;
  border-radius: 17px;
  background: #19437a;
  color: #c0c8d3;
}
.lock {
  width: 9px;
  height: 13px;
}
.url {
  flex: 1;
  padding-left: 12px;
  font-size: 14px;
  color: #fff;
}
.url span {
  color: #a3b4ca;
}
.extensions {
  display: flex;
  align-items: center;
  height: 28px;
  margin-right: 3px;
  border: 1px solid #3468a6;
  border-radius: 14px;
}
.extensions .tool:first-child,
.extensions .tool:last-child {
  width: 29px;
}
.profile {
  width: 22px;
  height: 22px;
  border-radius: 50%;
  background: #0097a7;
  line-height: 22px;
}

/* gmail */
.gmail {
  flex: 1;
  display: grid;
  grid-template-columns: 205px 1fr 45px;
  grid-template-rows: 51px 1fr;
  padding-bottom: 13px;
}
.brand {
  display: flex;
  align-items: center;
  padding-left: 11px;
  font-size: 17px;
}
.icon {
  width: 35px;
  height: 35px;
}
.icon svg {
  width: 16px;
  height: 16px;
}
.brand .icon svg {
  width: 15px;
  height: 12px;
}
.logo {
  width: 24px;
  height: 18px;
  margin: 0 8px 0 6px;
}
header {
  grid-column: 2 / 4;
  display: flex;
  align-items: center;
  padding-right: 14px;
}
.search {
  display: flex;
  align-items: center;
  width: 576px;
  height: 39px;
  margin-right: auto;
  padding: 0 16px 0 12px;
  border-radius: 20px;
  background: #eaf1fb;
}
.search svg {
  width: 15px;
  height: 15px;
}
.search input {
  flex: 1;
  margin-left: 8px;
  font-size: 12px;
}
.search input::placeholder {
  color: #6b6f74;
  opacity: 1;
}
.avatar {
  width: 26px;
  height: 26px;
  margin-left: 8px;
  border-radius: 50%;
  background: #0097a7;
  color: #fff;
  font-size: 13px;
}

nav {
  padding-top: 7px;
}
.compose {
  width: 114px;
  height: 44px;
  margin: 0 0 13px 6px;
  padding-left: 15px;
  justify-content: flex-start;
  gap: 15px;
  border-radius: 12px;
  background: #c2e7ff;
  color: #001d35;
}
.compose svg {
  width: 15px;
  height: 15px;
}
/* compact density: the rows share the height evenly */
.folders,
.labels {
  display: grid;
  grid-auto-rows: 1fr;
  min-height: 154px;
}
.labels {
  min-height: 410px;
}
nav a {
  display: flex;
  align-items: center;
  height: 100%;
  width: 192px;
  padding: 0 10px 0 22px;
  gap: 15px;
  color: #444746;
}
nav a svg {
  width: 14px;
  height: 14px;
}
nav .current {
  border-radius: 0 13px 13px 0;
  background: #d3e3fd;
  color: #001d35;
  font-weight: 600;
}
.labels a {
  gap: 0;
}
.labels a svg {
  width: 13px;
  height: 11px;
}
.labels span {
  width: 110px;
  margin-left: 16px;
  overflow: hidden;
  text-overflow: ellipsis;
  white-space: nowrap;
}
.labels i {
  flex: 1;
  font-style: normal;
  font-size: 10px;
  text-align: right;
  color: #6b6f74;
}
.unread span {
  font-weight: 600;
  color: #202124;
}
.labels-head {
  display: flex;
  align-items: center;
  justify-content: space-between;
  width: 183px;
  height: 48px;
  padding: 10px 0 0 21px;
}
.labels-head h2 {
  margin: 0;
  font-size: 13px;
  font-weight: 400;
}
.labels-head svg {
  width: 11px;
  height: 11px;
}

main {
  display: flex;
  flex-direction: column;
  border-radius: 12px;
  background: #fff;
}
.actions {
  display: flex;
  align-items: center;
  height: 38px;
  padding-left: 15px;
}
.actions input {
  appearance: none;
  width: 12px;
  height: 12px;
  margin: 0;
  border: 1px solid #5f6368;
  border-radius: 1px;
}
.actions button {
  width: 32px;
  height: 32px;
}
.actions svg {
  width: 15px;
  height: 15px;
}
.actions .more svg {
  width: 11px;
  height: 11px;
}
.actions .caret {
  width: 20px;
  margin-right: 5px;
}
.actions .caret svg {
  width: 6px;
  height: 4px;
}
.categories {
  display: flex;
  gap: 14px;
  height: 45px;
  margin-right: 12px;
  padding-left: 6px;
  border-bottom: 1px solid #eceff1;
}
.categories button {
  width: 188px;
  height: 45px;
  padding-left: 8px;
  justify-content: flex-start;
  gap: 14px;
  text-align: left;
}
.categories svg {
  width: 14px;
  height: 14px;
}
.categories .selected {
  border-bottom: 2px solid #0b57d0;
  color: #0b57d0;
  font-weight: 500;
}
.categories span {
  min-width: 0;
}
.categories b {
  display: inline-block;
  margin-left: 3px;
  padding: 0 3px;
  border-radius: 7px;
  background: #188038;
  color: #fff;
  font-size: 10px;
  line-height: 13px;
}
.categories small {
  display: block;
  width: 148px;
  overflow: hidden;
  text-overflow: ellipsis;
  white-space: nowrap;
  color: #9aa0a6;
  font-size: 9px;
}
.empty {
  display: flex;
  justify-content: center;
  flex: 0 1 613px;
  padding: 58px 20px 0 0;
  color: #6b6f74;
}
.empty h1 {
  margin: 0;
  font-size: 12px;
  font-weight: 400;
  line-height: 28px;
}
.empty p {
  margin: 0;
  line-height: 28px;
}
.empty a {
  color: #0b57d0;
}
footer {
  display: grid;
  grid-template-columns: 1fr 1fr 1fr;
  padding: 0 26px 0 13px;
  color: #6b6f74;
  font-size: 9px;
}
.meter {
  width: 176px;
  height: 4px;
  margin: 6px 0;
  border-radius: 2px;
  background: #dadce0;
}
.storage a {
  display: flex;
  align-items: center;
  gap: 8px;
}
.storage svg {
  width: 12px;
  height: 12px;
}
.terms {
  text-align: center;
}
.activity {
  text-align: right;
}

aside {
  display: flex;
  flex-direction: column;
  align-items: center;
}
aside button {
  width: 45px;
  height: 45px;
}
aside svg {
  width: 16px;
  height: 16px;
}
aside hr {
  width: 16px;
  height: 1px;
  margin: 12px 0;
  border: none;
  background: #dadce0;
}
aside .addons svg {
  width: 11px;
  height: 11px;
  color: #202124;
}
.hide-panel {
  height: 20px;
  margin-top: auto;
  color: #202124;
}
.hide-panel svg {
  width: 13px;
  height: 13px;
}

/* notification prompt, floats over the page */
.toast {
  position: fixed;
  left: 19px;
  bottom: 59px;
  display: flex;
  align-items: center;
  height: 42px;
  padding: 0 16px 0 19px;
  gap: 17px;
  border-radius: 3px;
  background: #202124;
  box-shadow: 0 2px 6px rgba(60, 64, 67, 0.4);
  color: #f1f3f4;
}
.toast button {
  color: #8ab4f8;
  font-weight: 500;
}
.toast .dismiss {
  margin-left: 4px;
  color: #bdc1c6;
}
.toast svg {
  width: 10px;
  height: 10px;
}

/* taskbar */
.taskbar {
  display: flex;
  align-items: center;
  height: 40px;
  background: linear-gradient(to right, #1e1e1e 45%, #30302e 68%, #2e2e2c 76%, #201f20 85%);
  color: #fff;
  font-family: "Open Sans", "Noto Sans", sans-serif;
}
.start {
  width: 48px;
  height: 40px;
}
.start svg {
  width: 16px;
  height: 16px;
}
.task-search {
  display: flex;
  align-items: center;
  width: 288px;
  height: 40px;
  padding: 0 8px 0 11px;
  border: 1px solid #6a6a6a;
  background: #474747;
}
.glass {
  width: 16px;
  height: 16px;
}
.task-search input {
  flex: 1;
  margin-left: 12px;
  font-size: 14px;
}
.task-search input::placeholder {
  color: #dcdcdc;
  opacity: 1;
}
.swirl {
  width: 60px;
  height: 34px;
}
.apps {
  display: flex;
  gap: 1px;
  margin-left: 3px;
}
.apps button {
  position: relative;
  width: 48px;
  height: 40px;
}
.apps svg {
  width: 32px;
  height: 32px;
}
.apps text {
  fill: #fff;
  font-size: 9px;
  text-anchor: middle;
}
.apps .small text {
  font-size: 7px;
}
.apps .open::after {
  content: "";
  position: absolute;
  left: 4px;
  right: 4px;
  bottom: 0;
  height: 2px;
  background: #aeaaa7;
}
.apps .focused {
  background: #393939;
}
.apps .focused::after {
  left: 0;
  right: 0;
}
.tray {
  display: flex;
  gap: 8px;
  margin-left: auto;
}
.tray svg {
  width: 16px;
  height: 16px;
}
.clock {
  width: 72px;
  text-align: center;
  line-height: 18px;
}
.notifications {
  width: 45px;
  height: 40px;
  margin-right: 4px;
  padding-left: 8px;
  justify-content: flex-start;
  border-right: 1px solid #777;
}
.notifications svg {
  width: 24px;
  height: 24px;
}
```
